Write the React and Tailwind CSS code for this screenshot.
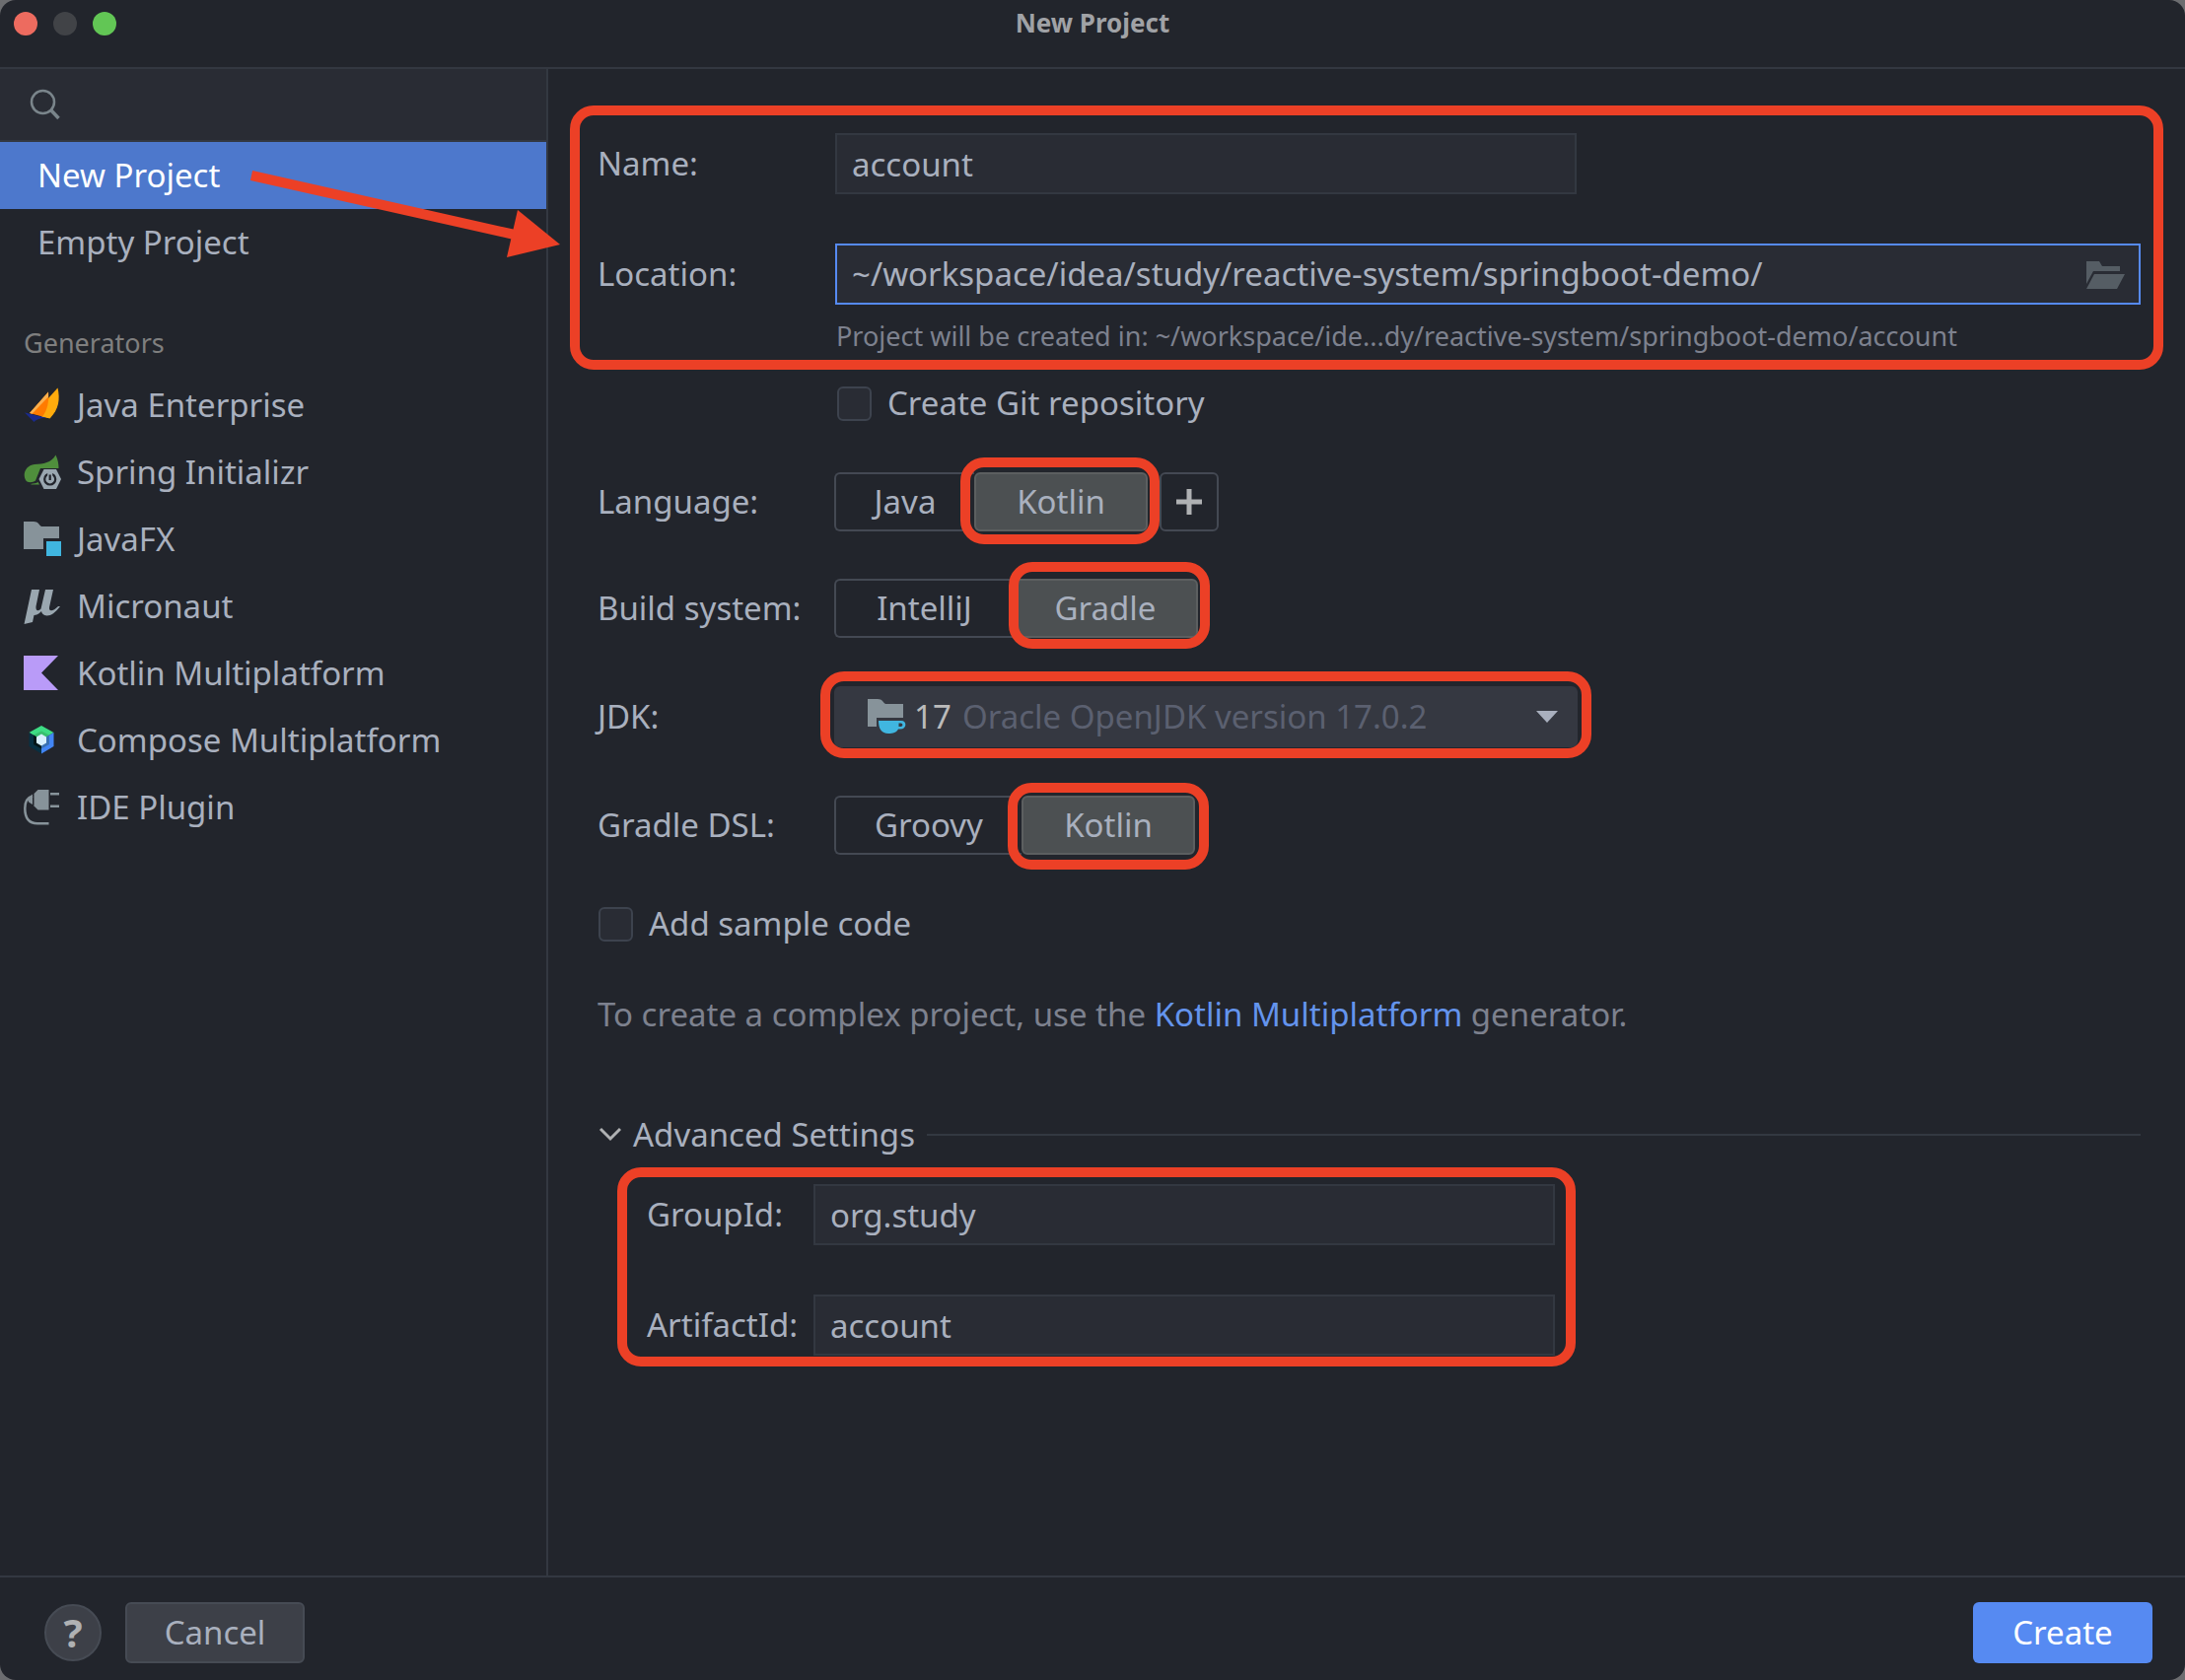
const generators = [
  { label: "Java Enterprise", Icon: JavaEnterpriseIcon },
  { label: "Spring Initializr", Icon: SpringIcon },
  { label: "JavaFX", Icon: JavaFxIcon },
  { label: "Micronaut", Icon: MicronautIcon },
  { label: "Kotlin Multiplatform", Icon: KotlinIcon },
  { label: "Compose Multiplatform", Icon: ComposeIcon },
  { label: "IDE Plugin", Icon: PluginIcon },
];

function JavaEnterpriseIcon() {
  return (
    <svg width="38" height="38" viewBox="0 0 38 38" aria-hidden="true">
      <path d="M34.5 1.5C37 12 36 23 26.500 32.500L19 30.500Z" fill="#ffab0d" />
      <path d="M34.500 1.500L25 12L18 31L27 32Z" fill="#ffab0d" />
      <path d="M25 5.500L6 27L19 30.500C24 24 26 15 25 5.500Z" fill="#ff7b00" />
      <path d="M25 5.500L6 27L8.500 27.700L25 10.500Z" fill="#f9b04f" />
      <path d="M1 26.500C8 28 14 30 23.500 31.500C18 32 14 32.500 10.500 36Z" fill="#1a2a8c" />
    </svg>
  );
}

function SpringIcon() {
  return (
    <svg width="38" height="38" viewBox="0 0 38 38" aria-hidden="true">
      <path
        d="M32.500 1.500C35 7 35.500 11 35.500 15H17L12 27.500C9 29.500 4 30 2 27C-1.500 21 2 12 11 11C20 10.500 28 9.500 32.500 1.500Z"
        fill="#4f8f3c"
      />
      <path d="M7 31C10 30.500 13 30 14.500 29L16 31.500H8Z" fill="#4f8f3c" />
      <path d="M20.500 16H33L38 26L33 36H20.500L15.500 26Z" fill="#9aa7b0" />
      <circle cx="26.700" cy="26" r="5.500" fill="none" stroke="#22252c" strokeWidth="2.200" />
      <path d="M26.700 19V25" stroke="#9aa7b0" strokeWidth="5" />
      <path d="M26.700 21.500V27" stroke="#22252c" strokeWidth="2.200" />
    </svg>
  );
}

function JavaFxIcon() {
  return (
    <svg width="38" height="38" viewBox="0 0 38 38" aria-hidden="true">
      <path d="M0 1H10C15 1 15 4 18 6H36V18H20V29H0Z" fill="#87939a" />
      <rect x="23" y="21" width="15" height="15" fill="#40b6e0" />
    </svg>
  );
}

function MicronautIcon() {
  return (
    <svg width="38" height="38" viewBox="0 0 38 38" aria-hidden="true">
      <path
        d="M8 2H16L12.500 19C12 24 15 24 17.500 21.500L22 2H30L26 20C25.500 25 30 24 35 19L37 19C32 25.500 28 28.500 23.500 28.500C20 28 18.500 26.500 18 24C15 27 12.500 28 10.500 28L9 35L.5 37Z"
        fill="#9aa7b0"
      />
    </svg>
  );
}

function KotlinIcon() {
  return (
    <svg width="38" height="38" viewBox="0 0 38 38" aria-hidden="true">
      <path d="M0 1H35L18 18.500L35 36H0Z" fill="#b99bf8" />
    </svg>
  );
}

function ComposeIcon() {
  return (
    <svg width="38" height="38" viewBox="0 0 38 38" aria-hidden="true">
      <path d="M18 4L30.500 11L18 18.500L5.500 11Z" fill="#3ddc84" />
      <path d="M30.500 11V25L18 32.500V18.500Z" fill="#4285f4" />
      <path d="M5.500 11L18 18.500V32.500L5.500 25Z" fill="#083042" />
      <path d="M18 9.500L26 13.500L18 18.500L10 13.500Z" fill="#37bf6e" />
      <path d="M26 13.500V23L18 27.500V18.500Z" fill="#3870b2" />
      <path d="M10 13.500L18 18.500V27.500L10 23Z" fill="#041619" />
      <path d="M18 12.500L23 15.500V21.500L18 24.500L13 21.500V15.500Z" fill="#d7effe" />
    </svg>
  );
}

function PluginIcon() {
  return (
    <svg width="38" height="38" viewBox="0 0 38 38" fill="#87939a" aria-hidden="true">
      <path d="M14.500 1H25.500V21.500H14.500L10.500 17.500V5Z" />
      <rect x="27" y="4" width="9" height="2.500" />
      <rect x="27" y="16.500" width="9" height="2.500" />
      <path d="M9 5.500V16L5 13.500L4 10Z" />
      <path d="M9 7.500C3.500 9 1.300 13 1.300 20C1.300 30 6 35.200 14 35.200H25.500" fill="none" stroke="#87939a" strokeWidth="2.500" />
    </svg>
  );
}

function JdkIcon() {
  return (
    <svg width="40" height="38" viewBox="0 0 40 38" aria-hidden="true">
      <path d="M0 1H10C15 1 15 4 18 6H36V20H9V29H0Z" fill="#87939a" />
      <path
        d="M11 23H34C40 23 40 31.500 33 31.500H31C29 35 26 36 21 36C14 36 11 31 11 23ZM31.500 25.500L31.500 29H33.500C36 29 36 25.500 33.500 25.500Z"
        fill="#40b6e0"
        fillRule="evenodd"
      />
    </svg>
  );
}

/* Red highlight frame drawn around its relative parent. */
function Highlight({ className }) {
  return (
    <span
      aria-hidden="true"
      className={`pointer-events-none absolute z-10 rounded-3xl border-10 border-[#ec4026] ${className}`}
    />
  );
}

function Field({ id, label, labelClass, value, inputClass }) {
  return (
    <div className="flex items-center">
      <label htmlFor={id} className={`shrink-0 ${labelClass}`}>
        {label}
      </label>
      <input
        id={id}
        defaultValue={value}
        className={`h-[62px] min-w-0 border-2 border-[#333841] bg-[#292c34] px-[15px] outline-none ${inputClass}`}
      />
    </div>
  );
}

function Row({ label, children, className }) {
  return (
    <div role="group" aria-label={label} className={`flex items-center ${className}`}>
      <span className="w-60 shrink-0">{label}</span>
      {children}
    </div>
  );
}

function Segment({ children, width }) {
  return (
    <button
      type="button"
      aria-pressed="false"
      className={`h-[60px] rounded-l-md border-2 border-r-0 border-[#444953] ${width}`}
    >
      {children}
    </button>
  );
}

function SelectedSegment({ children, width, frame }) {
  return (
    <div className="relative">
      <button
        type="button"
        aria-pressed="true"
        className={`block h-[60px] rounded-md border-2 border-[#5c5f60] bg-[#4c5052] ${width}`}
      >
        {children}
      </button>
      <Highlight className={frame} />
    </div>
  );
}

function Check({ label, className }) {
  return (
    <label className={`flex h-12 w-fit items-center gap-4 ${className}`}>
      <input
        type="checkbox"
        className="size-[35px] appearance-none rounded-md border-2 border-[#3d434e] bg-[#292c34]"
      />
      {label}
    </label>
  );
}

export default function App() {
  return (
    <div className="min-h-screen bg-[#6c6d70] font-['Noto_Sans',sans-serif] text-[33px] leading-[48px] text-[#a9b0be]">
      <div className="flex min-h-screen flex-col overflow-hidden rounded-2xl bg-[#22252c]">
        <header className="grid h-[70px] grid-cols-[1fr_auto_1fr] border-b-2 border-[#333841]">
          <div className="flex gap-4 pt-3 pl-3.5">
            <button type="button" aria-label="Close" className="size-6 rounded-full bg-[#ed6b5f]" />
            <button type="button" aria-label="Minimize" className="size-6 rounded-full bg-[#414347]" />
            <button type="button" aria-label="Zoom" className="size-6 rounded-full bg-[#62c655]" />
          </div>
          <h1 className="text-[26px] leading-[46px] font-bold text-[#a0a2a6]">New Project</h1>
        </header>

        <div className="flex flex-1">
          <aside className="relative w-[556px] shrink-0 border-r-2 border-[#333841]">
            <label className="flex h-[74px] items-center border-b-2 border-[#333841] bg-[#292c34] pl-[30px]">
              <svg width="32" height="32" viewBox="0 0 32 32" fill="none" stroke="#7a858b" aria-hidden="true">
                <circle cx="13.500" cy="13.500" r="11.500" strokeWidth="2.500" />
                <path d="M21.500 21.500L29.500 30" strokeWidth="3.500" />
              </svg>
              <input type="search" aria-label="Search" className="ml-3 min-w-0 flex-1 bg-transparent outline-none" />
            </label>
            <nav>
              <a href="#new" className="flex h-[68px] items-center bg-[#4d78cc] pl-[38px] text-white">
                New Project
              </a>
              <a href="#empty" className="flex h-[68px] items-center pl-[38px]">
                Empty Project
              </a>
              <h2 className="mt-11 mb-[5px] pl-6 text-[27px] text-[#7f7f7f]">Generators</h2>
              {generators.map(({ label, Icon }) => (
                <a key={label} href="#generator" className="flex h-[68px] items-center gap-4 pl-6">
                  <Icon />
                  {label}
                </a>
              ))}
            </nav>
            <svg
              className="pointer-events-none absolute top-[100px] left-[250px] z-20"
              width="320"
              height="100"
              viewBox="250 170 320 100"
              aria-hidden="true"
            >
              <path d="M255 178L522 238" stroke="#ec4026" strokeWidth="10" />
              <path d="M525 213L568 248L514 261Z" fill="#ec4026" />
            </svg>
          </aside>

          <main className="min-w-0 flex-1 pt-[65px] pr-[45px] pl-[50px]">
            <section className="relative">
              <Field id="name" label="Name:" labelClass="w-[241px]" value="account" inputClass="w-[752px]" />
              <div className="mt-[50px] flex items-center">
                <label htmlFor="location" className="w-[241px] shrink-0">
                  Location:
                </label>
                <div className="flex h-[62px] flex-1 items-center border-2 border-[#568af2] bg-[#292c34] pr-3.5 pl-[15px]">
                  <input
                    id="location"
                    defaultValue="~/workspace/idea/study/reactive-system/springboot-demo/"
                    className="min-w-0 flex-1 bg-transparent outline-none"
                  />
                  <button type="button" aria-label="Browse">
                    <svg width="40" height="32" viewBox="0 0 40 32" fill="#555d64" aria-hidden="true">
                      <path d="M1 3H14L17 8H35V13H8L1 26Z" />
                      <path d="M9 16H40L32 31H1Z" />
                    </svg>
                  </button>
                </div>
              </div>
              <p className="mt-3 ml-[242px] text-[27px] leading-10 text-[#7d818e]">
                Project will be created in: ~/workspace/ide...dy/reactive-system/springboot-demo/account
              </p>
              <Highlight className="-top-7 -right-[23px] -bottom-3.5 -left-7" />
            </section>

            <Check label="Create Git repository" className="mt-6 ml-[243px]" />

            <Row label="Language:" className="mt-[46px]">
              <Segment width="w-[142px]">Java</Segment>
              <SelectedSegment width="w-[176px]" frame="-right-3 -left-3.5 -top-[15px] -bottom-[13px]">
                Kotlin
              </SelectedSegment>
              <button
                type="button"
                aria-label="Add language"
                className="ml-3 flex h-[60px] w-[60px] items-center justify-center rounded-md border-2 border-[#444953]"
              >
                <svg width="26" height="26" viewBox="0 0 26 26" stroke="#afb1b3" strokeWidth="5" aria-hidden="true">
                  <path d="M13 0V26M0 13H26" />
                </svg>
              </button>
            </Row>

            <Row label="Build system:" className="mt-12">
              <Segment width="w-[181px]">IntelliJ</Segment>
              <SelectedSegment width="w-[188px]" frame="-right-3 -left-1 -top-[17px] -bottom-[11px]">
                Gradle
              </SelectedSegment>
            </Row>

            <div className="mt-[49px] flex items-center">
              <label htmlFor="jdk" className="w-60 shrink-0">
                JDK:
              </label>
              <div className="relative w-[754px]">
                <select
                  id="jdk"
                  className="block h-[62px] w-full appearance-none rounded-md bg-[#353841] pl-[81px] text-[#bbbbbb] outline-none"
                >
                  <option>17</option>
                </select>
                <div className="pointer-events-none absolute inset-0 flex items-center pr-5 pl-[34px]">
                  <JdkIcon />
                  <span className="ml-14 flex-1 text-[#5b6070]">Oracle OpenJDK version 17.0.2</span>
                  <svg width="22" height="12" viewBox="0 0 22 12" fill="#a9b0be" aria-hidden="true">
                    <path d="M0 0H22L11 12Z" />
                  </svg>
                </div>
                <Highlight className="-inset-x-3.5 -top-[15px] -bottom-[11px]" />
              </div>
            </div>

            <Row label="Gradle DSL:" className="mt-[49px]">
              <Segment width="w-[190px]">Groovy</Segment>
              <SelectedSegment width="w-[176px]" frame="-inset-x-3.5 -top-[13px] -bottom-[15px]">
                Kotlin
              </SelectedSegment>
            </Row>

            <Check label="Add sample code" className="mt-[46px] ml-px" />

            <p className="mt-11 text-[#7d818e]">
              To create a complex project, use the{" "}
              <a href="#kmp" className="text-[#6494ed]">
                Kotlin Multiplatform
              </a>{" "}
              generator.
            </p>

            <div className="mt-[74px] flex items-center">
              <button type="button" aria-expanded="true" className="flex items-center gap-3">
                <svg
                  width="24"
                  height="16"
                  viewBox="0 0 24 16"
                  fill="none"
                  stroke="#afb1b3"
                  strokeWidth="3"
                  aria-hidden="true"
                >
                  <path d="M3 2L13 12L23 2" />
                </svg>
                Advanced Settings
              </button>
              <span className="ml-3 h-0.5 flex-1 bg-[#333841]" />
            </div>

            <section className="relative mt-[26px] ml-[50px] w-fit">
              <Field id="group" label="GroupId:" labelClass="w-[169px]" value="org.study" inputClass="w-[752px]" />
              <div className="h-[50px]" />
              <Field id="artifact" label="ArtifactId:" labelClass="w-[169px]" value="account" inputClass="w-[752px]" />
              <Highlight className="-top-[17px] -right-[21px] -bottom-[11px] -left-[30px]" />
            </section>
          </main>
        </div>

        <footer className="flex h-[106px] items-center border-t-2 border-[#333841] pt-2 pr-[33px] pl-[45px]">
          <button
            type="button"
            className="size-[58px] rounded-full border-2 border-[#464b54] bg-[#3d4048] text-[40px] font-bold text-[#afb1b3]"
          >
            ?
          </button>
          <button
            type="button"
            className="ml-6 h-[62px] w-[182px] rounded-md border-2 border-[#464b54] bg-[#3d4048]"
          >
            Cancel
          </button>
          <button type="button" className="ml-auto h-[62px] w-[182px] rounded-md bg-[#568af2] text-white">
            Create
          </button>
        </footer>
      </div>
    </div>
  );
}
